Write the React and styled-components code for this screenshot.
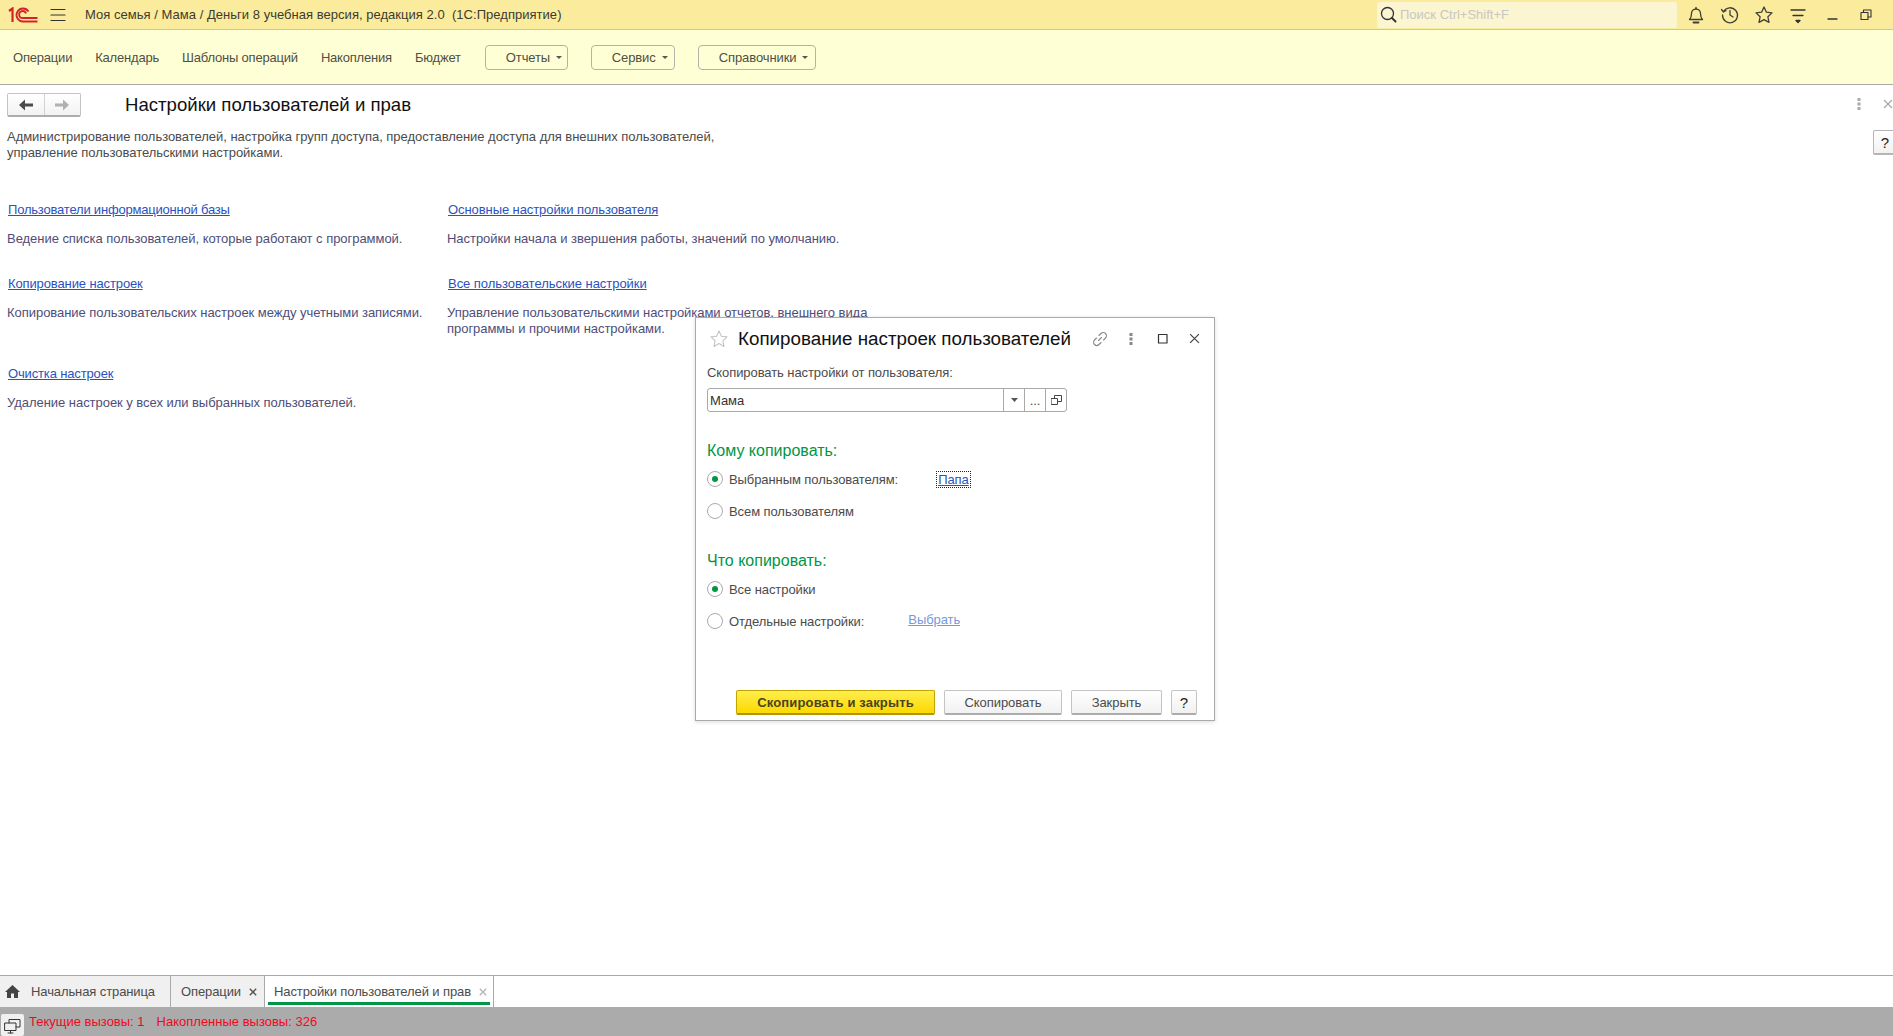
import styled, { createGlobalStyle } from "styled-components";

const GlobalStyle = createGlobalStyle`
  html, body { margin: 0; padding: 0; height: 100%; background: #fff; overflow: hidden; }
  #root { height: 100%; }
  * { box-sizing: border-box; }
`;

const Page = styled.div`
  height: 1036px;
  display: flex;
  flex-direction: column;
  font-family: "Liberation Sans", Arial, sans-serif;
  font-size: 13px;
  color: #4b4b4b;
`;

const TitleBar = styled.div`
  height: 30px;
  flex: none;
  display: flex;
  align-items: center;
  padding-right: 10px;
  background: #fbec9d;
  border-bottom: 1px solid #dac96f;
`;

const Logo = styled.svg`
  width: 30px;
  height: 16px;
  margin-left: 8px;
  flex: none;
`;

const BurgerWrap = styled.div`
  display: flex;
  margin-left: 12px;
  width: 16px;
`;

const AppTitle = styled.div`
  margin-left: 19px;
  color: #3b3b2f;
  white-space: pre;
  letter-spacing: 0.03px;
`;

const Search = styled.div`
  margin-left: auto;
  width: 300px;
  height: 26px;
  display: flex;
  align-items: center;
  gap: 3px;
  padding-left: 3px;
  background: #fcf5d2;
  border-radius: 2px;
  color: #c9c7bd;
`;

const TopIcons = styled.div`
  display: flex;
  align-items: center;
  margin-left: 2px;
`;

const TopIcon = styled.div`
  width: 34px;
  height: 29px;
  display: flex;
  align-items: center;
  justify-content: center;
`;

const Toolbar = styled.div`
  height: 55px;
  flex: none;
  display: flex;
  align-items: center;
  padding-left: 13px;
  background: #ffffd5;
  border-bottom: 1px solid #a9a9a9;
  letter-spacing: -0.2px;
`;

const MenuItem = styled.div`
  margin-right: 23px;
  color: #4f4f45;
`;

const MenuButtons = styled.div`
  display: flex;
  margin-left: 1px;
  gap: 23px;
`;

const MenuButton = styled.div`
  width: ${(p) => p.$w}px;
  height: 25px;
  display: flex;
  align-items: center;
  gap: 6px;
  padding-left: 20px;
  border: 1px solid #b3b3a8;
  border-radius: 4px;
  color: #4f4f45;
  letter-spacing: -0.1px;
  &::after {
    content: "";
    border-left: 3px solid transparent;
    border-right: 3px solid transparent;
    border-top: 3px solid #555;
  }
`;

const Main = styled.div`
  flex: 1;
  position: relative;
  min-height: 0;
`;

const Head = styled.div`
  display: flex;
  align-items: center;
  height: 24px;
  margin: 8px 0 0 7px;
`;

const NavGroup = styled.div`
  width: 74px;
  height: 24px;
  display: flex;
  border: 1px solid #c4c4c4;
  border-bottom: 2px solid #acacac;
  border-radius: 2px;
  background: linear-gradient(#fff, #f2f2f2);
`;

const NavButton = styled.div`
  flex: 1;
  display: flex;
  align-items: center;
  justify-content: center;
  & + & { border-left: 1px solid #d2d2d2; }
`;

const PageTitle = styled.h1`
  margin: 0 0 0 44px;
  font-size: 18.6px;
  font-weight: 400;
  color: #111;
`;

const HeadTools = styled.div`
  position: absolute;
  top: 0;
  right: 0;
  height: 38px;
  display: flex;
  align-items: center;
  gap: 22px;
`;

const HelpSide = styled.div`
  position: absolute;
  top: 45px;
  right: -4px;
  width: 24px;
  height: 25px;
  display: flex;
  align-items: center;
  justify-content: center;
  border: 1px solid #b5b5b5;
  border-bottom-width: 2px;
  border-radius: 2px;
  background: linear-gradient(#fff, #f2f2f2);
  color: #222;
  font-size: 15px;
`;

const Intro = styled.div`
  margin: 12px 0 0 7px;
  line-height: 16px;
  color: #4b4b4b;
  letter-spacing: -0.035px;
`;

const LinksGrid = styled.div`
  display: grid;
  grid-template-columns: 440px 500px;
  grid-template-rows: 74px 90px 60px;
  margin: 41px 0 0 7px;
`;

const Cell = styled.div`
  display: flex;
  flex-direction: column;
`;

const TextLink = styled.a`
  align-self: flex-start;
  margin-left: 1px;
  line-height: 16px;
  color: #2a52be;
  text-decoration: underline;
  letter-spacing: ${(p) => p.$ls}px;
`;

const Desc = styled.div`
  margin-top: 13px;
  line-height: 16px;
  color: #4e4e78;
  letter-spacing: -0.04px;
`;

const Tabs = styled.div`
  height: 32px;
  flex: none;
  display: flex;
  border-top: 1px solid #a9a9a9;
  background: #fff;
  letter-spacing: -0.1px;
`;

const Tab = styled.div`
  width: ${(p) => p.$w}px;
  display: flex;
  align-items: center;
  padding-left: ${(p) => p.$pad}px;
  background: ${(p) => (p.$active ? "#fff" : "#f0f0f0")};
  border-right: 1px solid #a9a9a9;
  color: #4b4b4b;
  position: relative;
  &::after {
    content: "";
    display: ${(p) => (p.$active ? "block" : "none")};
    position: absolute;
    left: 3px;
    right: 3px;
    bottom: 2px;
    height: 3px;
    background: #009646;
  }
`;

const HomeIcon = styled.svg`
  width: 15px;
  height: 13px;
  margin-right: 11px;
  flex: none;
`;

const TabClose = styled.span`
  margin-left: ${(p) => p.$gap}px;
  color: ${(p) => (p.$muted ? "#b8b8b8" : "#555")};
  display: flex;
`;

const StatusBar = styled.div`
  height: 29px;
  flex: none;
  display: flex;
  align-items: center;
  background: #ababab;
  color: #ef0a1f;
`;

const StatusButton = styled.div`
  width: 23px;
  height: 22px;
  margin: 7px 5px 0 1px;
  display: flex;
  align-items: center;
  justify-content: center;
  background: #f0f0f0;
  border-radius: 2px;
`;

const StatusText = styled.span`
  & + & { margin-left: 12px; }
`;

const Dialog = styled.div`
  position: absolute;
  left: 695px;
  top: 232px;
  width: 520px;
  height: 404px;
  display: flex;
  flex-direction: column;
  padding: 0 9px 0 11px;
  background: #fff;
  border: 1px solid #aaa;
  box-shadow: 0 1px 4px rgba(0, 0, 0, 0.15);
  letter-spacing: -0.08px;
`;

const DialogHead = styled.div`
  height: 41px;
  display: flex;
  align-items: center;
  flex: none;
`;

const StarWrap = styled.div`
  display: flex;
  margin-left: 2px;
`;

const DialogTitle = styled.div`
  margin-left: 9px;
  font-size: 18.8px;
  letter-spacing: 0;
  color: #111;
`;

const DialogTools = styled.div`
  margin-left: auto;
  margin-right: -5px;
  display: flex;
  align-items: center;
`;

const DialogTool = styled.div`
  width: 31.5px;
  display: flex;
  justify-content: center;
`;

const FieldLabel = styled.div`
  margin-top: 6px;
  line-height: 16px;
`;

const ComboBox = styled.div`
  width: 360px;
  height: 24px;
  margin-top: 7px;
  display: flex;
  border: 1px solid #a9a9a9;
  border-radius: 3px;
`;

const ComboValue = styled.div`
  flex: 1;
  display: flex;
  align-items: center;
  padding-left: 2px;
  color: #333;
`;

const ComboButton = styled.div`
  width: ${(p) => p.$w}px;
  display: flex;
  align-items: center;
  justify-content: center;
  border-left: 1px solid #a9a9a9;
`;

const SectionTitle = styled.div`
  margin-top: ${(p) => p.$top}px;
  font-size: 16px;
  line-height: 20px;
  letter-spacing: 0;
  color: #009646;
`;

const RadioRow = styled.div`
  height: 16px;
  margin-top: ${(p) => p.$top}px;
  display: flex;
  align-items: center;
`;

const Radio = styled.span`
  width: 16px;
  height: 16px;
  flex: none;
  margin-right: 6px;
  display: flex;
  align-items: center;
  justify-content: center;
  border: 1px solid #aaa;
  border-radius: 50%;
  &::after {
    content: "";
    display: ${(p) => (p.$on ? "block" : "none")};
    width: 6px;
    height: 6px;
    border-radius: 50%;
    background: #009646;
  }
`;

const FocusLink = styled.a`
  margin-left: ${(p) => p.$left}px;
  padding: 0 1px;
  color: #2a52be;
  text-decoration: underline;
  outline: 1px dotted #222;
`;

const MutedLink = styled.a`
  margin-left: ${(p) => p.$left}px;
  position: relative;
  top: -2px;
  color: #7898dc;
  text-decoration: underline;
`;

const DialogFooter = styled.div`
  margin-top: auto;
  margin-bottom: 5px;
  display: flex;
  justify-content: flex-end;
  gap: 9px;
  padding-right: 8px;
`;

const Btn = styled.div`
  width: ${(p) => p.$w}px;
  height: 25px;
  display: flex;
  align-items: center;
  justify-content: center;
  border-radius: 2px;
  border: 1px solid ${(p) => (p.$primary ? "#c2a400" : "#c4c4c4")};
  border-bottom: 2px solid ${(p) => (p.$primary ? "#b09400" : "#acacac")};
  background: ${(p) =>
    p.$primary ? "linear-gradient(#ffee4d, #fcd900)" : "linear-gradient(#fff, #f1f1f1)"};
  font-weight: ${(p) => (p.$primary ? 700 : 400)};
  letter-spacing: ${(p) => (p.$primary ? "0.15px" : "-0.05px")};
  font-size: ${(p) => (p.$help ? "15px" : "13px")};
  color: ${(p) => (p.$primary ? "#4a4420" : p.$help ? "#222" : "#4b4b4b")};
`;

const Stroke = ({ size = 20, w = 1.3, c = "#3f3f36", children, view = 20 }) => (
  <svg
    width={size}
    height={size}
    viewBox={`0 0 ${view} ${view}`}
    fill="none"
    stroke={c}
    strokeWidth={w}
    strokeLinecap="round"
    strokeLinejoin="round"
  >
    {children}
  </svg>
);

const Cross = ({ size = 10, c = "currentColor", w = 1.3 }) => (
  <svg width={size} height={size} viewBox="0 0 10 10" stroke={c} strokeWidth={w}>
    <path d="M1 1l8 8M9 1l-8 8" />
  </svg>
);

const Kebab = ({ c = "#777" }) => (
  <svg width="4" height="12" viewBox="0 0 4 12" fill={c}>
    <rect x="0.5" y="0" width="3" height="3" />
    <rect x="0.5" y="4.5" width="3" height="3" />
    <rect x="0.5" y="9" width="3" height="3" />
  </svg>
);

const StarPath = "M10 2l2.4 5.2 5.6.7-4.1 3.9 1.1 5.6L10 14.6l-5 2.8 1.1-5.6L2 7.9l5.6-.7z";

const links = [
  ["Пользователи информационной базы", -0.2, ["Ведение списка пользователей, которые работают с программой."]],
  ["Основные настройки пользователя", -0.08, ["Настройки начала и звершения работы, значений по умолчанию."]],
  ["Копирование настроек", -0.12, ["Копирование пользовательских настроек между учетными записями."]],
  [
    "Все пользовательские настройки",
    -0.04,
    ["Управление пользовательскими настройками отчетов, внешнего вида", "программы и прочими настройками."],
  ],
  ["Очистка настроек", -0.15, ["Удаление настроек у всех или выбранных пользователей."]],
];

export default function App() {
  return (
    <>
      <GlobalStyle />
      <Page>
        <TitleBar>
          <Logo viewBox="0 0 30 16" fill="none">
            <path d="M1 4l3.500-2.500V15" stroke="#d3232a" strokeWidth="2.2" />
            <path d="M20.500 4.500A6.500 6.500 0 1 0 15 14.500h14.500" stroke="#d3232a" strokeWidth="1.800" />
            <path d="M18 6.500A3.500 3.500 0 1 0 15 11h14.500" stroke="#d3232a" strokeWidth="1.800" />
          </Logo>
          <BurgerWrap>
            <Stroke size={16} view={16} c="#333" w={1.2}>
              <path d="M1 2.500h14M1 8h14M1 13.500h14" />
            </Stroke>
          </BurgerWrap>
          <AppTitle>Моя семья / Мама / Деньги 8 учебная версия, редакция 2.0  (1С:Предприятие)</AppTitle>
          <Search>
            <Stroke size={17} view={17} c="#333" w={1.3}>
              <circle cx="7.500" cy="7.500" r="6" />
              <path d="M12 12l3.500 3.500" strokeWidth="2" />
            </Stroke>
            Поиск Ctrl+Shift+F
          </Search>
          <TopIcons>
            <TopIcon>
              <Stroke>
                <path d="M3.500 14.500c1.500-1.500 2-3 2-6a4.500 4.500 0 0 1 9 0c0 3 .5 4.500 2 6z" />
                <path d="M10 2.500V4" />
                <path d="M7.500 17.500h5" strokeWidth="1.800" />
              </Stroke>
            </TopIcon>
            <TopIcon>
              <Stroke>
                <path d="M3.500 6.500A7.500 7.500 0 1 1 2.500 10" />
                <path d="M1.500 4.500l2 2.500 2.500-1.500" />
                <path d="M10 5.500V10l3 2" />
              </Stroke>
            </TopIcon>
            <TopIcon>
              <Stroke>
                <path d={StarPath} />
              </Stroke>
            </TopIcon>
            <TopIcon>
              <Stroke c="#333">
                <path d="M3 5h14M5 10.500h10" />
                <path d="M8 15.500h4l-2 2z" fill="#333" />
              </Stroke>
            </TopIcon>
            <TopIcon>
              <Stroke size={14} view={14} c="#333">
                <path d="M3 11h9" />
              </Stroke>
            </TopIcon>
            <TopIcon>
              <Stroke size={12} view={12} c="#333" w={1.1}>
                <rect x="1" y="3.500" width="7" height="7" />
                <path d="M3.500 3.500V1h7.500v7H8" />
              </Stroke>
            </TopIcon>
          </TopIcons>
        </TitleBar>

        <Toolbar>
          <MenuItem>Операции</MenuItem>
          <MenuItem>Календарь</MenuItem>
          <MenuItem>Шаблоны операций</MenuItem>
          <MenuItem>Накопления</MenuItem>
          <MenuItem>Бюджет</MenuItem>
          <MenuButtons>
            <MenuButton $w={83}>Отчеты</MenuButton>
            <MenuButton $w={84}>Сервис</MenuButton>
            <MenuButton $w={118}>Справочники</MenuButton>
          </MenuButtons>
        </Toolbar>

        <Main>
          <Head>
            <NavGroup>
              <NavButton>
                <svg width="14" height="12" viewBox="0 0 14 12" fill="#4a4a4a">
                  <path d="M0 6l6-5.500v4h8v3H6v4z" />
                </svg>
              </NavButton>
              <NavButton>
                <svg width="14" height="12" viewBox="0 0 14 12" fill="#b0b0b0">
                  <path d="M14 6L8 .5v4H0v3h8v4z" />
                </svg>
              </NavButton>
            </NavGroup>
            <PageTitle>Настройки пользователей и прав</PageTitle>
          </Head>
          <HeadTools>
            <Kebab c="#aaa" />
            <Cross c="#aaa" />
          </HeadTools>
          <HelpSide>?</HelpSide>
          <Intro>
            Администрирование пользователей, настройка групп доступа, предоставление доступа для внешних пользователей,
            <br />
            управление пользовательскими настройками.
          </Intro>
          <LinksGrid>
            {links.map(([title, ls, lines]) => (
              <Cell key={title}>
                <TextLink $ls={ls}>{title}</TextLink>
                <Desc>
                  {lines.map((line) => (
                    <div key={line}>{line}</div>
                  ))}
                </Desc>
              </Cell>
            ))}
          </LinksGrid>

          <Dialog>
            <DialogHead>
              <StarWrap>
                <Stroke c="#c4c4c4" w={1.1}>
                  <path d={StarPath} />
                </Stroke>
              </StarWrap>
              <DialogTitle>Копирование настроек пользователей</DialogTitle>
              <DialogTools>
                <DialogTool>
                  <Stroke size={16} view={16} c="#888" w={1.1}>
                    <path d="M6.500 9.500l3-3M7 4.500l2-2a3 3 0 0 1 4.500 4.500l-2 2M9 11.500l-2 2A3 3 0 0 1 2.500 9l2-2" />
                  </Stroke>
                </DialogTool>
                <DialogTool>
                  <Kebab c="#888" />
                </DialogTool>
                <DialogTool>
                  <Stroke size={12} view={12} c="#333" w={1.2}>
                    <rect x="1.500" y="1.500" width="8.500" height="8.500" />
                  </Stroke>
                </DialogTool>
                <DialogTool>
                  <Cross size={11} c="#444" w={1.1} />
                </DialogTool>
              </DialogTools>
            </DialogHead>
            <FieldLabel>Скопировать настройки от пользователя:</FieldLabel>
            <ComboBox>
              <ComboValue>Мама</ComboValue>
              <ComboButton $w={21}>
                <svg width="7" height="4" viewBox="0 0 7 4" fill="#555">
                  <path d="M0 0h7L3.500 4z" />
                </svg>
              </ComboButton>
              <ComboButton $w={21}>...</ComboButton>
              <ComboButton $w={21}>
                <Stroke size={11} view={11} c="#444" w={1}>
                  <rect x="0.500" y="3.500" width="6" height="6" />
                  <path d="M3.500 3.500V0.500h7v6h-3" />
                </Stroke>
              </ComboButton>
            </ComboBox>
            <SectionTitle $top={29}>Кому копировать:</SectionTitle>
            <RadioRow $top={10}>
              <Radio $on />
              Выбранным пользователям:
              <FocusLink $left={39}>Папа</FocusLink>
            </RadioRow>
            <RadioRow $top={16}>
              <Radio />
              Всем пользователям
            </RadioRow>
            <SectionTitle $top={32}>Что копировать:</SectionTitle>
            <RadioRow $top={10}>
              <Radio $on />
              Все настройки
            </RadioRow>
            <RadioRow $top={16}>
              <Radio />
              Отдельные настройки:
              <MutedLink $left={44}>Выбрать</MutedLink>
            </RadioRow>
            <DialogFooter>
              <Btn $primary $w={199}>Скопировать и закрыть</Btn>
              <Btn $w={118}>Скопировать</Btn>
              <Btn $w={91}>Закрыть</Btn>
              <Btn $help $w={26}>?</Btn>
            </DialogFooter>
          </Dialog>
        </Main>

        <Tabs>
          <Tab $w={171} $pad={5}>
            <HomeIcon viewBox="0 0 15 13" fill="#444">
              <path d="M7.500 0L15 7h-2v6H9V8.500H6V13H2V7H0z" />
            </HomeIcon>
            Начальная страница
          </Tab>
          <Tab $w={94} $pad={10}>
            Операции
            <TabClose $gap={8}>
              <Cross size={8} w={1.8} />
            </TabClose>
          </Tab>
          <Tab $active $w={229} $pad={9}>
            Настройки пользователей и прав
            <TabClose $gap={8} $muted>
              <Cross size={8} w={1.8} />
            </TabClose>
          </Tab>
        </Tabs>

        <StatusBar>
          <StatusButton>
            <Stroke size={17} view={17} c="#333" w={1}>
              <rect x="1" y="6" width="11" height="7.500" />
              <path d="M5 6V2.500h11V10h-4M4 16h5M6.500 13.500V16" />
            </Stroke>
          </StatusButton>
          <StatusText>Текущие вызовы: 1</StatusText>
          <StatusText>Накопленные вызовы: 326</StatusText>
        </StatusBar>
      </Page>
    </>
  );
}
